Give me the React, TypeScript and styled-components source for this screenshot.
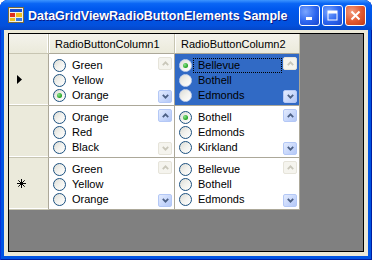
import styled, { createGlobalStyle } from "styled-components";

const GlobalStyle = createGlobalStyle`
  html, body {
    margin: 0;
    padding: 0;
    background: #ffffff;
  }
  * {
    box-sizing: border-box;
  }
`;

type Cell = {
  items: string[];
  checked: number;
  canUp: boolean;
  canDown: boolean;
  selected?: boolean;
};

type Row = {
  marker: "current" | "new" | "none";
  cells: Cell[];
};

const rows: Row[] = [
  {
    marker: "current",
    cells: [
      { items: ["Green", "Yellow", "Orange"], checked: 2, canUp: false, canDown: true },
      { items: ["Bellevue", "Bothell", "Edmonds"], checked: 0, canUp: false, canDown: true, selected: true },
    ],
  },
  {
    marker: "none",
    cells: [
      { items: ["Orange", "Red", "Black"], checked: -1, canUp: true, canDown: false },
      { items: ["Bothell", "Edmonds", "Kirkland"], checked: 0, canUp: true, canDown: true },
    ],
  },
  {
    marker: "new",
    cells: [
      { items: ["Green", "Yellow", "Orange"], checked: -1, canUp: false, canDown: true },
      { items: ["Bellevue", "Bothell", "Edmonds"], checked: -1, canUp: false, canDown: true },
    ],
  },
];

function AppIcon() {
  return (
    <svg width="16" height="16" viewBox="0 0 16 16">
      <rect x="0.5" y="0.5" width="15" height="15" fill="#f4f0e0" stroke="#7a6a3a" />
      <rect x="2" y="2" width="12" height="3" fill="#1c4fd0" />
      <rect x="2" y="6" width="5" height="4" fill="#e03020" />
      <rect x="8" y="6" width="6" height="4" fill="#f0c020" />
      <rect x="2" y="11" width="5" height="3" fill="#f0c020" />
      <rect x="8" y="11" width="6" height="3" fill="#3a7be0" />
    </svg>
  );
}

function Chevron({ up }: { up: boolean }) {
  return (
    <svg width="7" height="5" viewBox="0 0 7 5">
      <path
        d={up ? "M0.8 4.2 L3.5 1.4 L6.2 4.2" : "M0.8 0.8 L3.5 3.6 L6.2 0.8"}
        fill="none"
        stroke="currentColor"
        strokeWidth="1.8"
      />
    </svg>
  );
}

function Marker({ kind }: { kind: Row["marker"] }) {
  if (kind === "current") {
    return (
      <svg width="5" height="9" viewBox="0 0 5 9">
        <path d="M0 0 L5 4.5 L0 9 Z" fill="#000" />
      </svg>
    );
  }
  if (kind === "new") {
    return (
      <svg width="9" height="9" viewBox="0 0 9 9">
        <g stroke="#000" strokeWidth="1">
          <line x1="4.5" y1="0" x2="4.5" y2="9" />
          <line x1="0" y1="4.5" x2="9" y2="4.5" />
          <line x1="1.3" y1="1.3" x2="7.7" y2="7.7" />
          <line x1="7.7" y1="1.3" x2="1.3" y2="7.7" />
        </g>
      </svg>
    );
  }
  return null;
}

function RadioCell({ cell }: { cell: Cell }) {
  return (
    <DataCell $selected={!!cell.selected}>
      <RadioList>
        {cell.items.map((item, i) => (
          <RadioItem key={item}>
            <RadioCircle $onBlue={!!cell.selected}>
              {cell.checked === i && <RadioDot />}
            </RadioCircle>
            <RadioLabel $focused={!!cell.selected && i === 0}>{item}</RadioLabel>
          </RadioItem>
        ))}
      </RadioList>
      <ScrollColumn>
        <ScrollButton $enabled={cell.canUp}>
          <Chevron up />
        </ScrollButton>
        <ScrollButton $enabled={cell.canDown}>
          <Chevron up={false} />
        </ScrollButton>
      </ScrollColumn>
    </DataCell>
  );
}

export default function App() {
  return (
    <>
      <GlobalStyle />
      <Window>
        <TitleBar>
          <AppIcon />
          <Title>DataGridViewRadioButtonElements Sample</Title>
          <TitleButtons>
            <CaptionButton>
              <svg width="9" height="9" viewBox="0 0 9 9">
                <rect x="1" y="6" width="6" height="3" fill="#fff" />
              </svg>
            </CaptionButton>
            <CaptionButton>
              <svg width="11" height="11" viewBox="0 0 11 11">
                <rect x="1" y="1" width="9" height="9" fill="none" stroke="#fff" strokeWidth="1" />
                <rect x="1" y="1" width="9" height="2.5" fill="#fff" />
              </svg>
            </CaptionButton>
            <CaptionButton $close>
              <svg width="11" height="11" viewBox="0 0 11 11">
                <path d="M1.5 1.5 L9.5 9.5 M9.5 1.5 L1.5 9.5" stroke="#fff" strokeWidth="2" />
              </svg>
            </CaptionButton>
          </TitleButtons>
        </TitleBar>
        <Client>
          <GridView>
            <Table>
              <CornerHeader />
              <ColumnHeader>RadioButtonColumn1</ColumnHeader>
              <ColumnHeader>RadioButtonColumn2</ColumnHeader>
              {rows.map((row, r) => (
                <RowGroup key={r}>
                  <RowHeader>
                    <Marker kind={row.marker} />
                  </RowHeader>
                  {row.cells.map((cell, c) => (
                    <RadioCell key={c} cell={cell} />
                  ))}
                </RowGroup>
              ))}
            </Table>
          </GridView>
        </Client>
      </Window>
    </>
  );
}

const Window = styled.div`
  width: 372px;
  height: 260px;
  display: flex;
  flex-direction: column;
  border-radius: 8px 8px 0 0;
  background: #0054e3;
  box-shadow: inset 1px 0 #0831d9, inset -1px 0 #001ea0, inset 0 -1px #001ea0;
  overflow: hidden;
  font-family: "Liberation Sans", Arial, sans-serif;
`;

const TitleBar = styled.div`
  height: 30px;
  flex: none;
  display: flex;
  align-items: center;
  padding: 0 6px 0 8px;
  gap: 4px;
  background: linear-gradient(
    to bottom,
    #3d95ff 0%,
    #0a66f5 12%,
    #0058ee 30%,
    #0054e3 60%,
    #0350dc 85%,
    #0446c8 100%
  );
`;

const Title = styled.span`
  color: #ffffff;
  font-weight: bold;
  font-size: 12.5px;
  letter-spacing: 0;
  text-shadow: 1px 1px #0a1883;
  white-space: nowrap;
  margin-top: 1px;
`;

const TitleButtons = styled.div`
  margin-left: auto;
  display: flex;
  gap: 2px;
  margin-top: 1px;
`;

const CaptionButton = styled.div<{ $close?: boolean }>`
  width: 21px;
  height: 21px;
  border: 1px solid #ffffff;
  border-radius: 3px;
  display: flex;
  align-items: center;
  justify-content: center;
  background: ${(p) =>
    p.$close
      ? "radial-gradient(circle at 30% 30%, #f39c7f 0%, #e0582f 55%, #c13a15 100%)"
      : "radial-gradient(circle at 30% 30%, #7aa6ff 0%, #2c65ef 55%, #1846cc 100%)"};
`;

const Client = styled.div`
  flex: 1;
  margin: 0 4px 4px 4px;
  background: #ece9d8;
  padding: 3px 4px 4px 4px;
  display: flex;
`;

const GridView = styled.div`
  flex: 1;
  background: #808080;
  border: 1px solid #000000;
`;

const Table = styled.div`
  display: grid;
  grid-template-columns: 40px 126px 125px;
  grid-template-rows: 20px repeat(3, 52px);
  width: max-content;
  font-size: 11px;
  color: #000000;
`;

const RowGroup = styled.div`
  display: contents;
`;

const CornerHeader = styled.div`
  background: linear-gradient(#f4f3ec, #ebeadb);
  border-right: 1px solid #c7c5b2;
  border-bottom: 1px solid #c7c5b2;
  box-shadow: inset -1px 0 #ffffff;
`;

const ColumnHeader = styled.div`
  background: linear-gradient(#f4f3ec, #ebeadb);
  border-right: 1px solid #c7c5b2;
  border-bottom: 1px solid #aca899;
  box-shadow: inset 1px 0 #ffffff;
  display: flex;
  align-items: center;
  padding-left: 6px;
  white-space: nowrap;
`;

const RowHeader = styled.div`
  background: #ebeadb;
  border-right: 1px solid #aca899;
  border-bottom: 1px solid #c7c5b2;
  box-shadow: inset 0 -1px #ffffff;
  display: flex;
  align-items: center;
  padding-left: 8px;
`;

const DataCell = styled.div<{ $selected: boolean }>`
  background: ${(p) => (p.$selected ? "#316ac5" : "#ffffff")};
  border-right: 1px solid #aca899;
  border-bottom: 1px solid #aca899;
  display: flex;
`;

const RadioList = styled.div`
  flex: 1;
  display: flex;
  flex-direction: column;
  padding: 4px 1px 0 4px;
`;

const RadioItem = styled.div`
  height: 15px;
  display: flex;
  align-items: center;
`;

const RadioCircle = styled.span<{ $onBlue: boolean }>`
  width: 13px;
  height: 13px;
  flex: none;
  border-radius: 50%;
  border: 1px solid ${(p) => (p.$onBlue ? "#c8d4ec" : "#1c5180")};
  background: linear-gradient(135deg, #dcdcd5 0%, #f2f2ee 50%, #ffffff 100%);
  display: flex;
  align-items: center;
  justify-content: center;
`;

const RadioDot = styled.span`
  width: 5px;
  height: 5px;
  border-radius: 50%;
  background: radial-gradient(circle at 35% 35%, #8be38b 0%, #21a121 70%);
`;

const RadioLabel = styled.span<{ $focused: boolean }>`
  flex: 1;
  margin-left: 1px;
  padding-left: 4px;
  line-height: 13px;
  border: 1px dotted ${(p) => (p.$focused ? "#000000" : "transparent")};
  white-space: nowrap;
`;

const ScrollColumn = styled.div`
  flex: none;
  display: flex;
  flex-direction: column;
  justify-content: space-between;
  padding: 3px 2px 2px 0;
`;

const ScrollButton = styled.div<{ $enabled: boolean }>`
  width: 14px;
  height: 13px;
  border-radius: 2px;
  display: flex;
  align-items: center;
  justify-content: center;
  border: 1px solid ${(p) => (p.$enabled ? "#b4c8f6" : "#e6e4da")};
  background: ${(p) =>
    p.$enabled
      ? "linear-gradient(135deg, #e3ebfd 0%, #c6d6fb 60%, #b4c8f6 100%)"
      : "#f5f4ee"};
  color: ${(p) => (p.$enabled ? "#4d6185" : "#c9c7ba")};
`;
